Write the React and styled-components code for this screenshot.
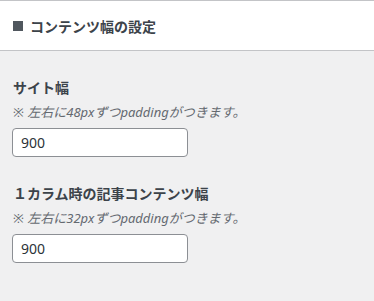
import React from "react";
import styled, { createGlobalStyle } from "styled-components";

const GlobalStyle = createGlobalStyle`
  body {
    margin: 0;
    background: #f0f0f1;
    font-family: "Noto Sans", "Noto Sans CJK JP", sans-serif;
    color: #3c434a;
  }
`;

const Header = styled.div`
  background: #fff;
  border-top: 1px solid #c3c4c7;
  border-bottom: 1px solid #c3c4c7;
  height: 49px;
  display: flex;
  align-items: center;
  padding-left: 13px;
`;

const Title = styled.h2`
  margin: 0;
  font-size: 14px;
  font-weight: 700;
  color: #3c434a;
  font-family: "Noto Sans CJK JP", sans-serif;
  display: flex;
  align-items: center;
  gap: 7px;
`;

const Square = styled.span`
  display: inline-block;
  width: 10px;
  height: 10px;
  background: #50575e;
`;

const Body = styled.div`
  padding: 26px 12px 0;
`;

const Field = styled.div`
  margin-bottom: 26px;
`;

const Label = styled.div`
  font-size: 14px;
  font-weight: 700;
  line-height: 20px;
  padding-left: 1px;
  color: #3c434a;
  font-family: "Noto Sans CJK JP", sans-serif;
`;

const Note = styled.div`
  font-size: 13px;
  line-height: 20px;
  margin-top: 5px;
  padding-left: 1px;
  font-style: italic;
  color: #646970;
  font-family: "Noto Sans", "Noto Sans CJK JP", sans-serif;
`;

const Input = styled.input`
  display: block;
  box-sizing: border-box;
  margin-top: 6px;
  width: 176px;
  height: 29px;
  padding: 0 8px;
  border: 1px solid #8c8f94;
  border-radius: 4px;
  background: #fff;
  font-size: 14px;
  color: #2c3338;
  font-family: "Noto Sans", sans-serif;
  outline: none;
`;

const fields = [
  { label: "サイト幅", note: "※ 左右に48pxずつpaddingがつきます。", value: "900" },
  { label: "１カラム時の記事コンテンツ幅", note: "※ 左右に32pxずつpaddingがつきます。", value: "900" },
];

export default function App() {
  return (
    <>
      <GlobalStyle />
      <Header>
        <Title>
          <Square />
          コンテンツ幅の設定
        </Title>
      </Header>
      <Body>
        {fields.map((f) => (
          <Field key={f.label}>
            <Label>{f.label}</Label>
            <Note>{f.note}</Note>
            <Input type="text" defaultValue={f.value} />
          </Field>
        ))}
      </Body>
    </>
  );
}
